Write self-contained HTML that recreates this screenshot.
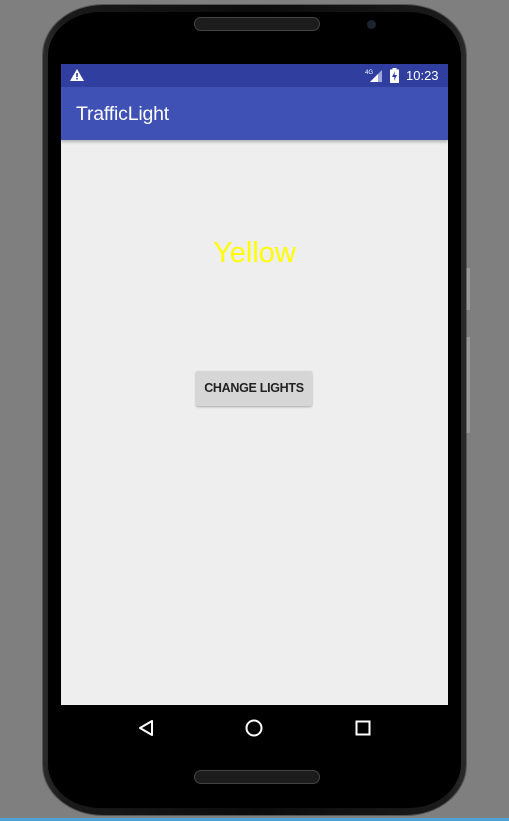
<!DOCTYPE html>
<html><head><meta charset="utf-8"><style>
html,body{margin:0;padding:0}
body{width:509px;height:821px;background:#7f7f7f;position:relative;overflow:hidden;font-family:"Liberation Sans",sans-serif}
.phone{position:absolute;left:43px;top:5px;width:423px;height:810px;border-radius:60px/50px;background:linear-gradient(90deg,#2a2a2a,#1a1a1a 5%,#0b0b0b 50%,#1a1a1a 95%,#2a2a2a);box-shadow:0 0 0 1px #555}
.inner{position:absolute;left:48px;top:12px;width:413px;height:796px;border-radius:52px/44px;background:#000}
.spk{position:absolute;left:194px;width:124px;height:12px;border-radius:7px;background:#1c1c1c;border:1px solid #444}
.cam{position:absolute;left:367px;top:20px;width:9px;height:9px;border-radius:50%;background:#1d2230}
.screen{position:absolute;left:61px;top:64px;width:387px;height:641px;background:#eeeeee}
.sb{position:absolute;left:0;top:0;width:387px;height:23px;background:#303f9f;color:#fff;font-size:13px}
.tb{position:absolute;left:0;top:23px;width:387px;height:53px;background:#3f51b5;box-shadow:0 2px 3px rgba(0,0,0,.25)}
.tb span{position:absolute;left:15px;top:16px;color:#fff;font-size:19.5px;font-weight:500;letter-spacing:-0.2px}
.yel{position:absolute;left:0;width:387px;top:173px;text-align:center;color:#ffff00;font-size:29px}
.btn{position:absolute;left:135px;top:307px;width:116px;height:35px;background:#d6d6d6;border-radius:2px;box-shadow:0 1px 2px rgba(0,0,0,.3);color:#222;font-size:12.5px;font-weight:bold;text-align:center;line-height:35px;letter-spacing:-0.3px}
.nav{position:absolute;left:61px;top:705px;width:387px;height:46px;background:#000}
.side{position:absolute;left:466px;width:3px;background:#999;border-left:1px solid #666}
</style></head><body>
<div class="phone"></div>
<div class="inner"></div>
<div class="spk" style="top:17px"></div>
<div class="spk" style="top:770px"></div>
<div class="cam"></div>
<div class="side" style="top:268px;height:42px"></div>
<div class="side" style="top:337px;height:96px"></div>
<div class="screen">
 <div class="sb">
  <svg style="position:absolute;left:9px;top:5px" width="14" height="12" viewBox="0 0 14 12"><path d="M7 0L14 12H0Z" fill="#fff"/><rect x="6.2" y="4" width="1.6" height="4" fill="#303f9f"/><rect x="6.2" y="9" width="1.6" height="1.5" fill="#303f9f"/></svg>
  <svg style="position:absolute;left:304px;top:4px" width="18" height="15" viewBox="0 0 18 15"><text x="0" y="6" font-size="6" fill="#fff" font-family="Liberation Sans">4G</text><path d="M17 2V14H5Z" fill="#9fa8da"/><path d="M13 6V14H5Z" fill="#fff"/></svg>
  <svg style="position:absolute;left:329px;top:4px" width="9" height="15" viewBox="0 0 9 15"><rect x="0" y="1.5" width="9" height="13.5" fill="#fff"/><rect x="2.5" y="0" width="4" height="2" fill="#fff"/><path d="M5 3L2 9H4.5L4 13L7 7H4.5Z" fill="#303f9f"/></svg>
  <span style="position:absolute;left:345px;top:4px">10:23</span>
 </div>
 <div class="tb"><span>TrafficLight</span></div>
 <div class="yel">Yellow</div>
 <div class="btn">CHANGE LIGHTS</div>
</div>
<div class="nav">
 <svg style="position:absolute;left:77px;top:14px" width="16" height="18" viewBox="0 0 16 18"><path d="M14 2V16L2 9Z" fill="none" stroke="#fff" stroke-width="2" stroke-linejoin="round"/></svg>
 <svg style="position:absolute;left:184px;top:14px" width="18" height="18" viewBox="0 0 18 18"><circle cx="9" cy="9" r="7.5" fill="none" stroke="#fff" stroke-width="2"/></svg>
 <svg style="position:absolute;left:294px;top:15px" width="16" height="16" viewBox="0 0 16 16"><rect x="1.5" y="1.5" width="13" height="13" fill="none" stroke="#fff" stroke-width="2"/></svg>
</div>
<div style="position:absolute;left:0;top:818px;width:509px;height:3px;background:#4fa3d8"></div>
</body></html>
